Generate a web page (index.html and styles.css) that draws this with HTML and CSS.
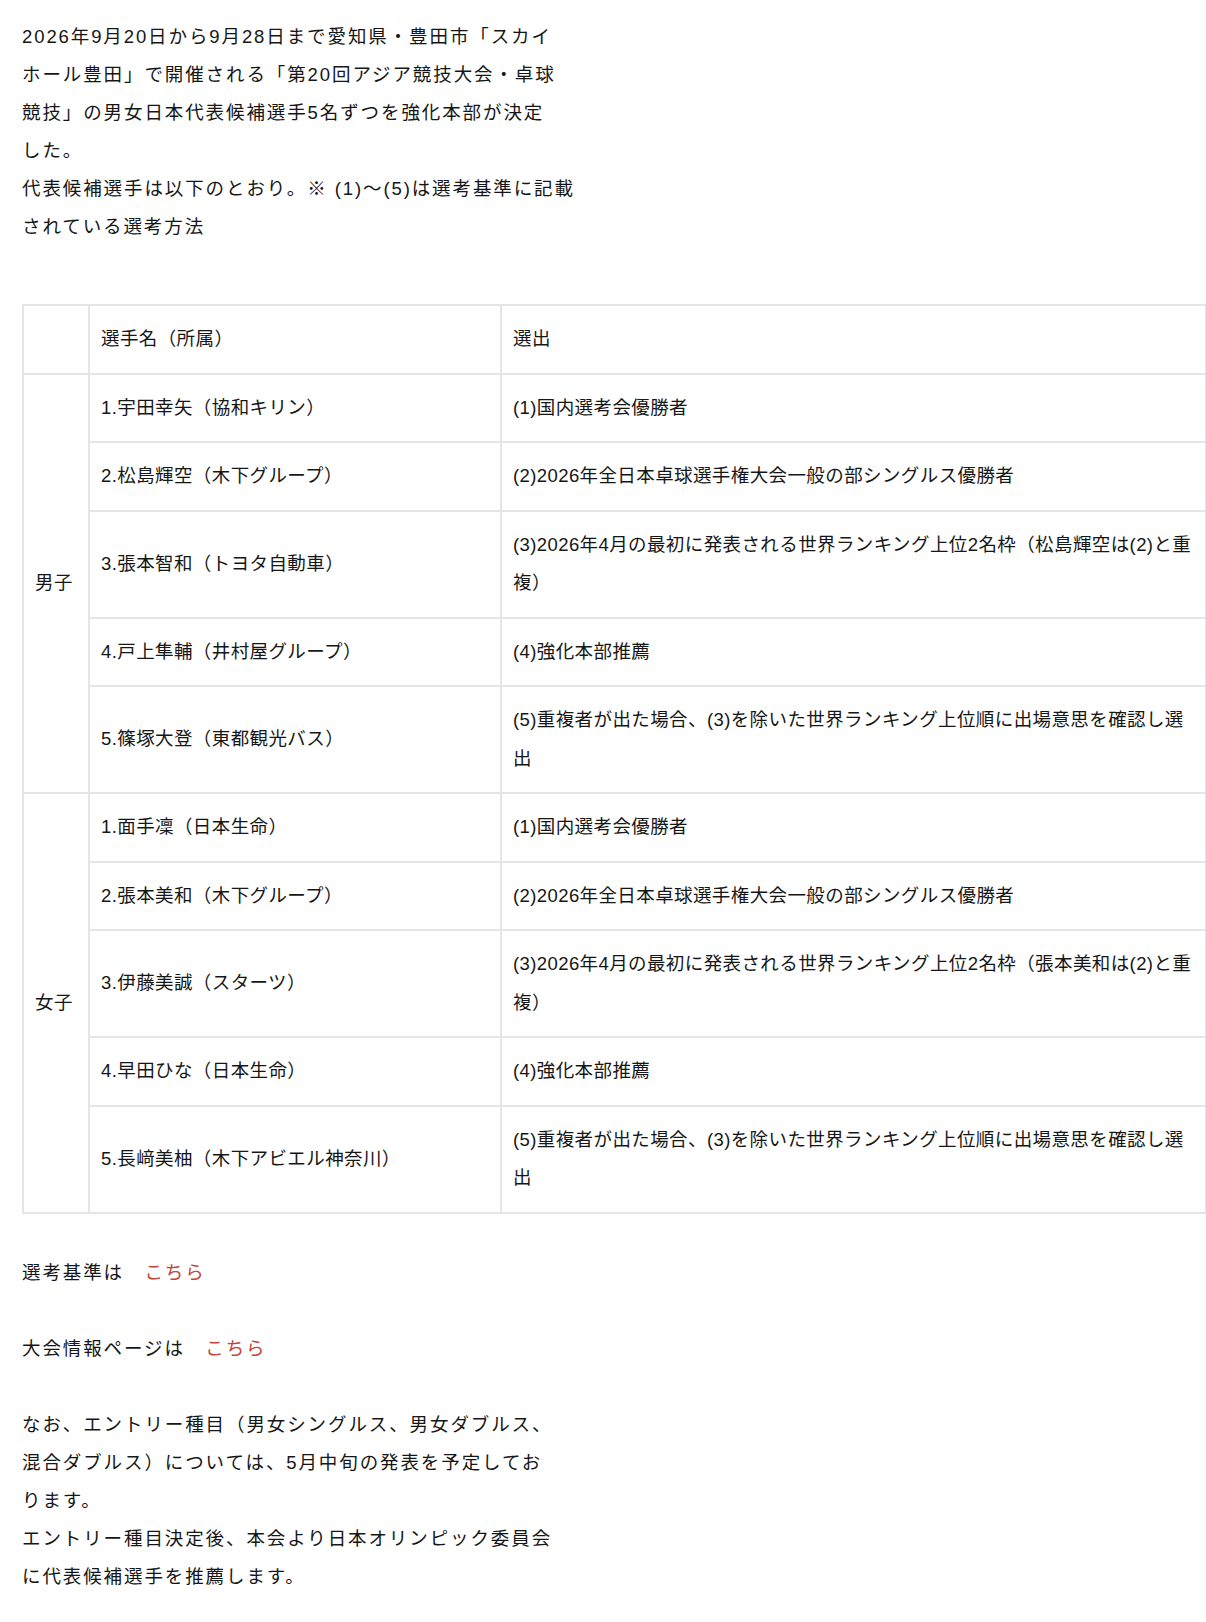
FILE: index.html
```html
<!DOCTYPE html>
<html lang="ja">
<head>
<meta charset="utf-8">
<title>アジア競技大会 卓球 日本代表候補選手</title>
<link rel="stylesheet" href="styles.css">
</head>
<body>
<main class="article">
  <p class="text">2026年9月20日から9月28日まで愛知県・豊田市「スカイ<br>ホール豊田」で開催される「第20回アジア競技大会・卓球<br>競技」の男女日本代表候補選手5名ずつを強化本部が決定<br>した。<br>代表候補選手は以下のとおり。※ (1)〜(5)は選考基準に記載<br>されている選考方法</p>

  <table class="players">
    <colgroup>
      <col class="c-group">
      <col class="c-name">
      <col class="c-sel">
    </colgroup>
    <tr>
      <td></td>
      <td>選手名（所属）</td>
      <td>選出</td>
    </tr>
    <tr>
      <td rowspan="5">男子</td>
      <td>1.宇田幸矢（協和キリン）</td>
      <td>(1)国内選考会優勝者</td>
    </tr>
    <tr>
      <td>2.松島輝空（木下グループ）</td>
      <td>(2)2026年全日本卓球選手権大会一般の部シングルス優勝者</td>
    </tr>
    <tr>
      <td>3.張本智和（トヨタ自動車）</td>
      <td>(3)2026年4月の最初に発表される世界ランキング上位2名枠（松島輝空は(2)と重<br>複）</td>
    </tr>
    <tr>
      <td>4.戸上隼輔（井村屋グループ）</td>
      <td>(4)強化本部推薦</td>
    </tr>
    <tr>
      <td>5.篠塚大登（東都観光バス）</td>
      <td>(5)重複者が出た場合、(3)を除いた世界ランキング上位順に出場意思を確認し選<br>出</td>
    </tr>
    <tr>
      <td rowspan="5">女子</td>
      <td>1.面手凜（日本生命）</td>
      <td>(1)国内選考会優勝者</td>
    </tr>
    <tr>
      <td>2.張本美和（木下グループ）</td>
      <td>(2)2026年全日本卓球選手権大会一般の部シングルス優勝者</td>
    </tr>
    <tr>
      <td>3.伊藤美誠（スターツ）</td>
      <td>(3)2026年4月の最初に発表される世界ランキング上位2名枠（張本美和は(2)と重<br>複）</td>
    </tr>
    <tr>
      <td>4.早田ひな（日本生命）</td>
      <td>(4)強化本部推薦</td>
    </tr>
    <tr>
      <td>5.長﨑美柚（木下アビエル神奈川）</td>
      <td>(5)重複者が出た場合、(3)を除いた世界ランキング上位順に出場意思を確認し選<br>出</td>
    </tr>
  </table>

  <p class="text after-table">選考基準は　<a class="link" href="#">こちら</a></p>
  <p class="text">大会情報ページは　<a class="link" href="#">こちら</a></p>
  <p class="text">なお、エントリー種目（男女シングルス、男女ダブルス、<br>混合ダブルス）については、5月中旬の発表を予定してお<br>ります。<br>エントリー種目決定後、本会より日本オリンピック委員会<br>に代表候補選手を推薦します。</p>
</main>
</body>
</html>
```

FILE: styles.css
```css
html, body {
  margin: 0;
  padding: 0;
  background: #ffffff;
}

body {
  font-family: "Liberation Sans", "Noto Sans CJK JP", sans-serif;
  color: #161616;
  font-size: 18.5px;
}

.article {
  padding: 18px 0 40px 22px;
}

.text {
  margin: 0 0 38px 0;
  line-height: 38px;
  letter-spacing: 1.9px;
  white-space: nowrap;
}

.text:first-child {
  margin-bottom: 58px;
}

.after-table {
  margin-top: 40px;
}

.link {
  color: #c4453b;
  text-decoration: none;
}

.players {
  border-collapse: collapse;
  width: 1183px;
  table-layout: fixed;
  font-size: 18.5px;
  letter-spacing: 0.4px;
}

.c-group { width: 66px; }
.c-name { width: 412px; }
.c-sel { width: 705px; }

.players td {
  border: 2px solid #e4e5e6;
  padding: 14px 10px 14px 11px;
  line-height: 38.5px;
  vertical-align: middle;
  white-space: nowrap;
}
```
